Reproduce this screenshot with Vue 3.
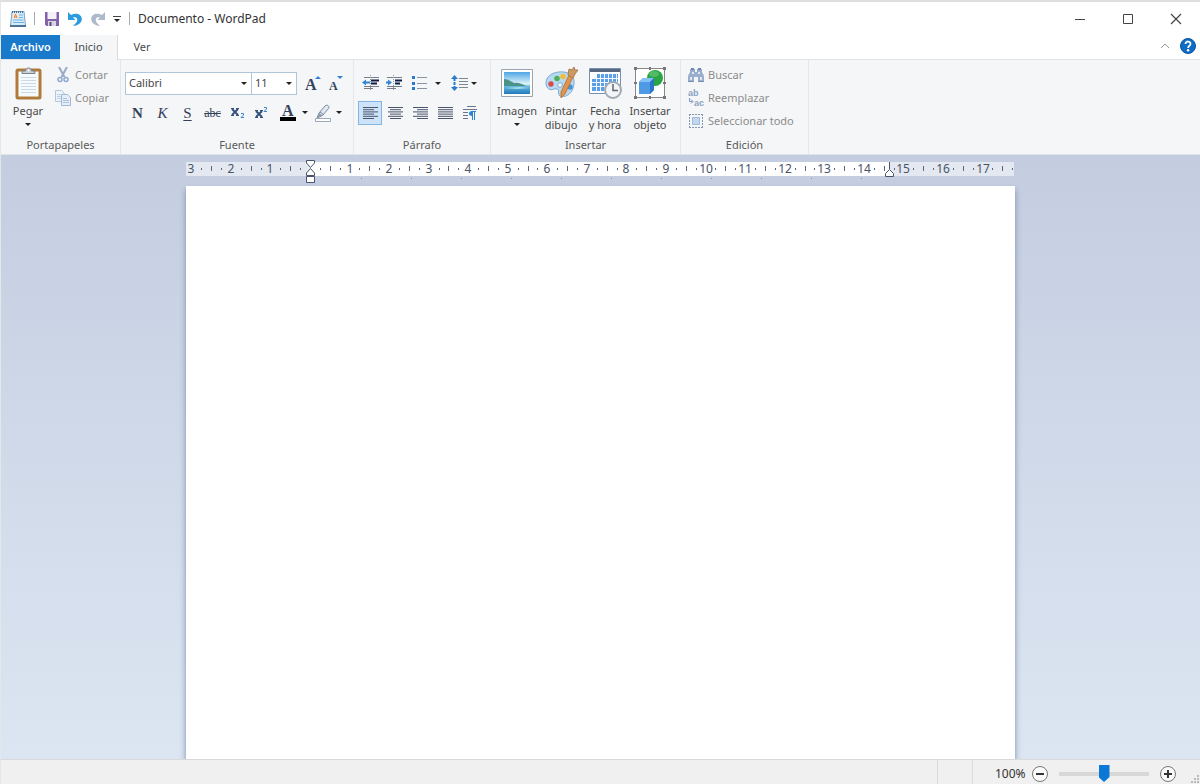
<script setup>
import { ref } from 'vue'

const font = ref('Calibri')
const size = ref('11')
const zoom = ref(50)
const text = ref('')

const CM = 39.56
const ZERO = 124
const labels = []
const dots = []
const ticks = []
for (let n = -3; n <= 17; n++) {
  const x = Math.round(ZERO + n * CM)
  if (n !== 0) labels.push({ x: Math.max(x, 5), t: Math.abs(n) })
  dots.push(Math.round(ZERO + (n + 0.25) * CM))
  ticks.push(Math.round(ZERO + (n + 0.5) * CM))
  dots.push(Math.round(ZERO + (n + 0.75) * CM))
}
const stops = Array.from({ length: 11 }, (_, i) => 175 + i * 50)

const aligns = [
  { name: 'Alinear a la izquierda', rows: [[0, 15], [0, 11], [0, 15], [0, 11], [0, 15], [0, 11]] },
  { name: 'Centrar', rows: [[0, 15], [2, 11], [0, 15], [2, 11], [0, 15], [2, 11]] },
  { name: 'Alinear a la derecha', rows: [[0, 15], [4, 11], [0, 15], [4, 11], [0, 15], [4, 11]] },
  { name: 'Justificar', rows: [[0, 15], [0, 15], [0, 15], [0, 15], [0, 15], [0, 15]] }
]
</script>

<template>
  <div class="window">
    <header class="titlebar">
      <svg class="app-icon" width="18" height="18" viewBox="0 0 18 18">
        <path d="M3 1.500h12l1.500 14.500h-15z" fill="#d8ecf8" stroke="#7fa3c0" />
        <path d="M3 2h12" stroke="#47719a" stroke-width="2" stroke-dasharray="1 1" />
        <path d="M4 4h5v4.500H4z" fill="#fbe9dc" />
        <path d="M5 8l1.500-4 1.500 4M5.500 7h2" stroke="#e0843f" fill="none" />
        <path d="M10 5h4M10 7.500h4M4 10h10.500M4 12.500h11" stroke="#6fb2e0" />
        <path d="M1 16h16" stroke="#4c7296" stroke-width="2" />
      </svg>
      <i class="bar"></i>
      <button class="qa" aria-label="Guardar">
        <svg width="16" height="16" viewBox="0 0 16 16">
          <path d="M1 1h14v14H2.500L1 13.500z" fill="#8462ad" />
          <path d="M3.500 1h9v7h-9z" fill="#f4f1f8" />
          <path d="M4 10h8v5H4z" fill="#d9d6df" />
          <path d="M5.500 11h2v4h-2z" fill="#5c4385" />
        </svg>
      </button>
      <button class="qa" aria-label="Deshacer">
        <svg width="16" height="16" viewBox="0 0 16 16">
          <path d="M1 1v8h7.500L6 6.500c3-.6 4.600 .6 4.200 2.800-.3 2-1.600 3.400-4.200 5.700 5.400-.4 8.700-3.200 8.800-7C14.900 3.200 9 1.200 4 4z" fill="#2d9bdf" />
        </svg>
      </button>
      <button class="qa" aria-label="Rehacer">
        <svg width="16" height="16" viewBox="0 0 16 16">
          <path d="M15 1v8H7.500L10 6.500c-3-.6-4.600 .6-4.200 2.800.3 2 1.600 3.400 4.200 5.700-5.400-.4-8.700-3.200-8.800-7C1.100 3.200 7 1.200 12 4z" fill="#adbacb" />
        </svg>
      </button>
      <button class="qa narrow" aria-label="Personalizar barra de herramientas">
        <svg width="8" height="8" viewBox="0 0 8 8"><path d="M0 1.500h8" stroke="#444" /><path d="M1 4h6L4 7z" fill="#222" /></svg>
      </button>
      <i class="bar end"></i>
      <h1>Documento - WordPad</h1>
      <div class="controls">
        <button aria-label="Minimizar"><svg width="12" height="12"><path d="M1 6.500h10" stroke="#444" /></svg></button>
        <button aria-label="Maximizar"><svg width="12" height="12"><path d="M1.500 1.500h9v9h-9z" fill="none" stroke="#444" /></svg></button>
        <button aria-label="Cerrar"><svg width="12" height="12"><path d="M1 1l10 10M11 1L1 11" stroke="#444" stroke-width="1.200" /></svg></button>
      </div>
    </header>

    <nav class="tabs">
      <button class="tab file">Archivo</button>
      <button class="tab active">Inicio</button>
      <button class="tab view">Ver</button>
      <div class="tab-tools">
        <button aria-label="Minimizar la cinta"><svg width="10" height="6"><path d="M1 5l4-4 4 4" fill="none" stroke="#999" /></svg></button>
        <button aria-label="Ayuda">
          <svg width="18" height="18" viewBox="0 0 18 18">
            <circle cx="9" cy="9" r="7.500" fill="#0f6cc4" stroke="#0a56a3" />
            <path d="M6.500 7c0-3.400 5.200-3.200 5 0-.1 1.700-2.400 1.900-2.400 4" fill="none" stroke="#fff" stroke-width="1.800" />
            <circle cx="9.100" cy="13.300" r="1.200" fill="#fff" />
          </svg>
        </button>
      </div>
    </nav>

    <main class="ribbon">
      <section class="group clipboard">
        <div class="body">
          <button class="big paste">
            <svg width="32" height="34" viewBox="0 0 32 34">
              <rect x="5" y="4" width="23" height="28" rx="1" fill="#fff" stroke="#b07a3c" stroke-width="3" />
              <path d="M7 7h19v23H7z" fill="#f7fafc" />
              <path d="M9 11.500h15M9 14.500h15M9 17.500h15M9 20.500h15M9 23.500h15M9 26.500h15" stroke="#c9d9e6" />
              <path d="M10 7.500V5h3.500c0-4 6-4 6 0H23v2.500z" fill="#c9ced4" stroke="#7b848f" />
              <circle cx="16.500" cy="4.500" r="1" fill="#fff" />
            </svg>
            <span>Pegar</span>
            <svg class="caret" width="6" height="4"><path d="M0 0h6L3 3z" fill="#222" /></svg>
          </button>
          <div class="stack">
            <button class="small" disabled>
              <svg width="16" height="16" viewBox="0 0 16 16">
                <path d="M4 0l5.500 10M12 0L6.500 10" stroke="#98abc5" stroke-width="2" />
                <circle cx="5" cy="12.500" r="2" fill="none" stroke="#8fa9cf" stroke-width="1.500" />
                <circle cx="11" cy="12.500" r="2" fill="none" stroke="#8fa9cf" stroke-width="1.500" />
              </svg>Cortar
            </button>
            <button class="small" disabled>
              <svg width="16" height="16" viewBox="0 0 16 16">
                <path d="M.5.500h6l2.500 2.500v8.500H.5z" fill="#eef3fa" stroke="#b3c5dd" />
                <path d="M2 4.500h4M2 6.500h4M2 8.500h4" stroke="#c0cfe3" />
                <path d="M6.500 4.500h6l3 3v8h-9z" fill="#e4edf8" stroke="#a0b7d6" />
                <path d="M8 8.500h4M8 10.500h6M8 12.500h6" stroke="#acc1de" />
              </svg>Copiar
            </button>
          </div>
        </div>
        <h2>Portapapeles</h2>
      </section>

      <section class="group fonts">
        <div class="body rows">
          <div class="row">
            <label class="combo family">
              <select v-model="font" aria-label="Familia de fuente"><option>Calibri</option><option>Arial</option></select>
              <svg width="6" height="4"><path d="M0 0h6L3 3z" fill="#222" /></svg>
            </label>
            <label class="combo size">
              <select v-model="size" aria-label="Tamaño de fuente"><option>11</option><option>12</option></select>
              <svg width="6" height="4"><path d="M0 0h6L3 3z" fill="#222" /></svg>
            </label>
            <button class="tool first" aria-label="Agrandar fuente">
              <svg width="20" height="24" viewBox="0 0 20 24"><text class="letter" x="2" y="19" font-size="16">A</text><path d="M12 8h6l-3-3z" fill="#3480d4" /></svg>
            </button>
            <button class="tool" aria-label="Encoger fuente">
              <svg width="20" height="24" viewBox="0 0 20 24"><text class="letter" x="2" y="19" font-size="12">A</text><path d="M10 5h6l-3 3z" fill="#3480d4" /></svg>
            </button>
          </div>
          <div class="row format">
            <button class="tool bold" aria-label="Negrita">N</button>
            <button class="tool italic" aria-label="Cursiva">K</button>
            <button class="tool underline" aria-label="Subrayado">S</button>
            <button class="tool strike" aria-label="Tachado">abc</button>
            <button class="tool" aria-label="Subíndice">
              <svg width="18" height="18" viewBox="0 0 18 18"><path d="M3 5l6 6M9 5l-6 6" stroke="#35527f" stroke-width="2" /><path d="M2 4.500h3M7 4.500h3M2 11.500h3M7 11.500h3" stroke="#35527f" /><path d="M12 9.500h2.500v1.500L12 13.500h3" fill="none" stroke="#3b86d2" /></svg>
            </button>
            <button class="tool" aria-label="Superíndice">
              <svg width="18" height="18" viewBox="0 0 18 18"><path d="M2 7l6 6M8 7l-6 6" stroke="#35527f" stroke-width="2" /><path d="M1 6.500h3M6 6.500h3M1 13.500h3M6 13.500h3" stroke="#35527f" /><path d="M10 3.500h2.500V5L10 7.500h3" fill="none" stroke="#3b86d2" /></svg>
            </button>
            <button class="tool drop" aria-label="Color de texto">
              <svg width="32" height="20" viewBox="0 0 32 20"><text class="letter" x="5" y="13" font-size="16">A</text><path d="M3 14h16v4H3z" fill="#000" /><path d="M25 8h6l-3 3z" fill="#222" /></svg>
            </button>
            <button class="tool drop" aria-label="Color de resaltado">
              <svg width="32" height="20" viewBox="0 0 32 20">
                <path d="M3.500 15.500h15v3h-15z" fill="#fff" stroke="#9ca9bb" />
                <path d="M5 15l2-5 6-7c2-2 5 0 3.500 2.500l-6 7L5 15z" fill="#e1e7ef" stroke="#7888a0" />
                <path d="M5 15l2-5 3.500 2.500z" fill="#8a9cb2" /><path d="M8 9l4 3" stroke="#7888a0" />
                <path d="M24 8h6l-3 3z" fill="#222" />
              </svg>
            </button>
          </div>
        </div>
        <h2>Fuente</h2>
      </section>

      <section class="group paragraph">
        <div class="body rows">
          <div class="row indents">
            <button class="tool" aria-label="Reducir sangría">
              <svg width="18" height="18" viewBox="0 0 18 18"><path d="M2 3.500h15M2 12.500h15M2 14.500h9" stroke="#777f8e" /><path d="M9 6.500h8M9 9.500h6" stroke="#111b43" stroke-width="2" /><path d="M8.500 1v16" stroke="#999" stroke-dasharray="1 1" /><path d="M0 8.500l4-3v2h4v2H4v2z" fill="#3185d8" /></svg>
            </button>
            <button class="tool" aria-label="Aumentar sangría">
              <svg width="18" height="18" viewBox="0 0 18 18"><path d="M1 3.500h15M1 12.500h15M1 14.500h9" stroke="#777f8e" /><path d="M9 6.500h7M9 9.500h5" stroke="#111b43" stroke-width="2" /><path d="M7.500 1v16" stroke="#999" stroke-dasharray="1 1" /><path d="M6 8.500l-4-3v2H0v2h2v2z" fill="#3185d8" /></svg>
            </button>
            <button class="tool drop list" aria-label="Lista">
              <svg width="30" height="16" viewBox="0 0 30 16"><path d="M6 2.500h10M6 8.500h10M6 13.500h10" stroke="#8a93a1" /><path d="M1 1h3v3H1zM1 7h3v3H1zM1 12h3v3H1z" fill="#287bd0" /><path d="M24 7h6l-3 3z" fill="#222" /></svg>
            </button>
            <button class="tool drop spacing" aria-label="Interlineado">
              <svg width="28" height="18" viewBox="0 0 28 18"><path d="M9 4.500h9M9 7.500h9M9 10.500h9M9 13.500h9" stroke="#7d8694" /><path d="M1 5h7L4.500 1zM1 13h7l-3.500 4z" fill="#287bd0" /><path d="M4.500 4v10" stroke="#287bd0" stroke-width="2" stroke-dasharray="3 1" /><path d="M21 8h6l-3 3z" fill="#222" /></svg>
            </button>
          </div>
          <div class="row">
            <button v-for="(a, i) in aligns" :key="a.name" class="tool spaced" :class="{ selected: i === 0 }" :aria-label="a.name">
              <svg width="15" height="14" viewBox="0 0 15 14">
                <rect v-for="(r, j) in a.rows" :key="j" :x="r[0]" :y="1 + j * 2.2" :width="r[1]" height="1" fill="#4a546c" />
              </svg>
            </button>
            <button class="tool" aria-label="Párrafo">
              <svg width="16" height="16" viewBox="0 0 16 16"><path d="M5 1.500h9M1 4.500h14M1 7.500h5M1 10.500h5M1 13.500h5" stroke="#68758b" /><path d="M10 6H14V7H13V15H12V7H11V15H10V11C6 11 6 6 10 6z" fill="#2f83d5" /></svg>
            </button>
          </div>
        </div>
        <h2>Párrafo</h2>
      </section>

      <section class="group insert">
        <div class="body">
          <button class="big">
            <svg width="34" height="34" viewBox="0 0 34 34">
              <defs><linearGradient id="sky" x1="0" y1="0" x2="0" y2="1"><stop offset="0" stop-color="#4fa5e5" /><stop offset=".55" stop-color="#e0f5fa" /><stop offset=".65" stop-color="#65b8de" /><stop offset="1" stop-color="#2179bb" /></linearGradient></defs>
              <path d="M1.500 3.500h31v27h-31z" fill="#fff" stroke="#9aa5b1" />
              <path d="M4 6h26v22H4z" fill="url(#sky)" />
              <path d="M4 13c4 0 6 2 10 4 4-1 8 1 12 3H4z" fill="#4b9287" />
              <path d="M4 22l16-1 10 1-13 1z" fill="#a7dfe9" />
            </svg>
            <span>Imagen</span>
            <svg class="caret" width="6" height="4"><path d="M0 0h6L3 3z" fill="#222" /></svg>
          </button>
          <button class="big">
            <svg width="34" height="34" viewBox="0 0 34 34">
              <path d="M2 17C2 9 11 5 20 6c9 1 12 8 9 16-2 7-9 10-13 8-3-2 0-6-3-7s-5 2-8 0c-2-1-3-3-3-6z" fill="#b8d9f2" stroke="#7fabd0" />
              <circle cx="7" cy="18" r="2.700" fill="#d94b49" /><circle cx="13" cy="12.500" r="2.700" fill="#4caf51" /><circle cx="19" cy="10.500" r="2.700" fill="#f0bd37" /><circle cx="16" cy="19" r="2.300" fill="#fff" stroke="#7ba9ce" /><circle cx="26" cy="21" r="2.700" fill="#4b91d8" />
              <path d="M25 9l4 2-8 17-4 4 0-6z" fill="#e0954e" stroke="#b96a25" stroke-width=".8" />
              <path d="M25 3l3 1 2-3 1 3h3l-3 4-2 4-5-3z" fill="#cd9a64" stroke="#a97b50" />
            </svg>
            <span>Pintar<br>dibujo</span>
          </button>
          <button class="big">
            <svg width="34" height="34" viewBox="0 0 34 34">
              <path d="M1.500 2.500h31v25h-31z" fill="#fff" stroke="#7890b4" />
              <path d="M2 3h30v3H2z" fill="#59677e" />
              <path d="M4 8h26v17H4z" fill="#5a9fe8" />
              <path d="M4 12.500h26M4 16.500h26M4 20.500h26M8.500 8v17M12.500 8v17M16.500 8v17M20.500 8v17M24.500 8v17M28.500 8v17" stroke="#f5f9ff" />
              <path d="M4 8h4v4H4z" fill="#fff" />
              <circle cx="25" cy="24" r="8" fill="#f3f5f7" stroke="#a2aab3" stroke-width="2" />
              <path d="M25 18v6.500h5" fill="none" stroke="#5d6874" stroke-width="1.500" />
            </svg>
            <span>Fecha<br>y hora</span>
          </button>
          <button class="big last">
            <svg width="34" height="34" viewBox="0 0 34 34">
              <path d="M2.500 2.500h29v29h-29z" fill="#fff" stroke="#888" />
              <circle cx="22" cy="12" r="8" fill="#2ba443" /><ellipse cx="21" cy="8" rx="5" ry="3" fill="#64c576" opacity=".7" />
              <path d="M6 16l4-4h11v12l-4 4H6z" fill="#4f9ae4" /><path d="M6 16l4-4h11l-4 4z" fill="#83c0f5" /><path d="M17 16l4-4v12l-4 4z" fill="#2b76c8" />
              <path d="M1 1h3v3H1zM16 1h2v3h-2zM30 1h3v3h-3zM1 16h3v2H1zM30 16h3v2h-3zM1 30h3v3H1zM16 30h2v3h-2zM30 30h3v3h-3z" fill="#777" />
            </svg>
            <span>Insertar<br>objeto</span>
          </button>
        </div>
        <h2>Insertar</h2>
      </section>

      <section class="group edit">
        <div class="body">
          <div class="stack">
            <button class="small" disabled>
              <svg width="16" height="16" viewBox="0 0 16 16">
                <path d="M2 5V2h5v3h2V2h5v3l2 4v6h-6v-5H6v5H0V9z" fill="#98aecb" /><path d="M3 1h3v2H3zM10 1h3v2h-3z" fill="#7189ab" /><path d="M2 10h2v3H2zM12 10h2v3h-2zM4 5h2v2H4zM10 5h2v2h-2z" fill="#dce6f3" /><path d="M0 14.500h6M10 14.500h6" stroke="#758fb3" />
              </svg>Buscar
            </button>
            <button class="small" disabled>
              <span class="swap">
                <span>ab</span>
                <span class="to"><svg width="6" height="6" viewBox="0 0 6 6"><path d="M1.500 0v3.500h3M3 1.500l2 2-2 2" fill="none" stroke="#7898c6" /></svg>ac</span>
              </span>Reemplazar
            </button>
            <button class="small" disabled>
              <svg width="16" height="16" viewBox="0 0 16 16"><path d="M1 1.500h14M1 14.500h14M1.500 1v14M14.500 1v14" fill="none" stroke="#8194b0" stroke-dasharray="2 1" /><path d="M4.500 4.500h7v7h-7z" fill="#c3d7ef" stroke="#9fb9da" /></svg>Seleccionar todo
            </button>
          </div>
        </div>
        <h2>Edición</h2>
      </section>
    </main>

    <div class="workspace">
      <svg class="ruler" width="829" height="26" viewBox="0 0 829 26">
        <path d="M0 2h828v14H0z" fill="#e4e8f1" />
        <path d="M124 2h579v14H124z" fill="#fff" />
        <g fill="#5c6678">
          <rect v-for="d in dots.filter(d => d > 0 && d < 829)" :key="'d' + d" :x="d" y="8" width="1" height="2" />
          <rect v-for="t in ticks.filter(t => t > 0 && t < 829)" :key="'t' + t" :x="t" y="6" width="1" height="5" />
        </g>
        <rect v-for="s in stops" :key="'s' + s" :x="s" y="18" width="1" height="1" fill="#8790a3" />
        <text v-for="l in labels" :key="l.x" :x="l.x" y="13" text-anchor="middle">{{ l.t }}</text>
        <g fill="#fff" stroke="#4a5468">
          <path d="M120.500.500h8v2.500l-4 4.500-4-4.500z" />
          <path d="M120.500 15.500v-2.500l4-4.500 4 4.500v2.500z" />
          <path d="M120.500 16.500h8v6h-8z" />
          <path d="M699.500 16.500v-3l4-4 4 4v3z" />
        </g>
        <path d="M703.500 2v7" stroke="#4a5468" />
      </svg>
      <textarea v-model="text" class="page" aria-label="Documento" spellcheck="false"></textarea>
    </div>

    <footer class="status">
      <div class="cell"></div>
      <div class="zoom">
        <label for="zoom">100%</label>
        <button aria-label="Alejar"><svg width="18" height="18"><circle cx="9" cy="9" r="7.500" fill="#fafafa" stroke="#777" /><path d="M5 9h8" stroke="#333" stroke-width="2" /></svg></button>
        <input id="zoom" v-model="zoom" type="range" min="0" max="100">
        <button aria-label="Acercar"><svg width="18" height="18"><circle cx="9" cy="9" r="7.500" fill="#fafafa" stroke="#777" /><path d="M5 9h8M9 5v8" stroke="#333" stroke-width="2" /></svg></button>
      </div>
      <svg class="grip" width="10" height="10"><path d="M7 1h2v2H7zM4 4h2v2H4zM7 4h2v2H7zM1 7h2v2H1zM4 7h2v2H4zM7 7h2v2H7z" fill="#bbb" /></svg>
    </footer>
  </div>
</template>

<style>
body { margin: 0; }
</style>

<style scoped>
* { box-sizing: border-box; }
.window {
  display: flex; flex-direction: column; min-height: 100vh;
  border-top: 2px solid #dedede; border-left: 1px solid #e4e6ea;
  background: #fff; color: #4a4a4a; font: 11px/14px "Noto Sans", "Open Sans", sans-serif;
}
button { padding: 0; border: 0; background: none; font: inherit; color: inherit; }
svg { display: block; flex: none; }
h1, h2 { margin: 0; font-weight: 400; }

.titlebar { display: flex; align-items: center; height: 33px; padding-left: 8px; }
.bar { width: 1px; height: 13px; margin: 0 5px 0 7px; background: #aaa; }
.bar.end { margin: 0 8px 0 5px; }
.qa { display: grid; place-items: center; width: 23px; height: 24px; }
.qa.narrow { width: 15px; }
.titlebar h1 { font-size: 12px; line-height: 16px; color: #333; }
.controls { display: flex; margin-left: auto; }
.controls button { display: grid; place-items: center; width: 48px; height: 32px; }

.tabs { display: flex; height: 25px; border-bottom: 1px solid #e1e3e6; }
.tab { height: 25px; padding-bottom: 2px; }
.file { width: 59px; height: 24px; padding-bottom: 0; background: #1979ca; color: #fff; font-weight: 600; }
.active { width: 58px; background: #f5f6f7; border-right: 1px solid #dadbdc; }
.view { width: 48px; }
.tab-tools { display: flex; align-items: center; gap: 9px; margin-left: auto; padding: 0 3px 2px 0; }

.ribbon { display: flex; min-height: 95px; background: #f5f6f7; border-bottom: 1px solid #dfe5e9; }
.group { display: flex; flex-direction: column; padding-top: 3px; border-right: 1px solid #e4e6e9; }
.body { display: flex; height: 74px; padding-left: 4px; }
.group h2 { text-align: center; font-size: 11px; line-height: 16px; color: #5a5a5a; }
.clipboard { width: 120px; }
.fonts { width: 233px; }
.paragraph { width: 137px; }
.insert { width: 190px; }
.edit { width: 128px; }
.edit .body { padding-left: 7px; }
.big { display: flex; flex-direction: column; align-items: center; width: 44px; padding-top: 3px; white-space: nowrap; }
.big span { margin-top: 4px; }
.big .caret { margin-top: 5px; }
.last { width: 46px; }
.clipboard .body { padding-left: 0; }
.paste { width: 54px; }
.stack { display: flex; flex-direction: column; }
.small { display: flex; align-items: center; gap: 4px; height: 23px; white-space: nowrap; }
.small:disabled { color: #8c8c8c; }
.swap { width: 16px; font: 700 9px/10px "Liberation Sans", sans-serif; text-align: left; color: #8ca2c4; }
.swap span { display: flex; }

.rows { flex-direction: column; padding-top: 8px; gap: 6px; }
.row { display: flex; height: 24px; align-items: center; }
.indents { padding-left: 1px; }
.tool { display: grid; place-items: center; width: 24px; height: 24px; }
.tool.first { margin-left: 4px; }
.format .tool { width: 25px; }
.format .tool.drop { width: 35px; }
.spaced { margin-right: 1px; }
.selected { background: #cce3f9; border: 1px solid #84b4e2; }
.tool.list { width: 34px; margin-left: 2px; }
.tool.spacing { width: 32px; margin-left: 5px; }
.bold, .italic, .underline, .strike { font-family: "Liberation Serif", serif; font-size: 15px; color: #34405a; }
.bold { font-weight: 700; }
.italic { font-style: italic; }
.underline { text-decoration: underline; text-underline-offset: 2px; }
.strike { font-size: 12px; text-decoration: line-through; }
.letter { font-family: "Liberation Serif", serif; font-weight: 700; fill: #34435d; }
.combo { position: relative; }
.combo select {
  display: block; width: 100%; height: 23px; padding: 0 3px; appearance: none;
  border: 1px solid #aec5da; border-radius: 0; background: #fff; color: #444; font: inherit;
}
.combo svg { position: absolute; right: 5px; top: 10px; pointer-events: none; }
.family { width: 127px; }
.size { width: 46px; margin-left: -1px; }

.workspace {
  display: flex; flex: 1; flex-direction: column; align-items: center; padding-top: 5px; overflow: hidden;
  background: linear-gradient(#c4cde0, #dce6f2);
}
.ruler { max-width: 100%; }
.ruler text { font: 12px "Noto Sans", sans-serif; fill: #4a5468; }
.page {
  display: block; flex: 1; width: 829px; max-width: 100%; padding: 40px 124px; border: 0; outline: 0; resize: none;
  background: #fff; box-shadow: 0 4px 6px #7c8ba8; font: 15px/20px "Noto Sans", sans-serif;
}

.status { display: flex; align-items: stretch; justify-content: flex-end; height: 25px; border-top: 1px solid #d9d9d9; background: #f0f0f0; }
.cell { width: 36px; border: solid #dadada; border-width: 0 1px; }
.zoom { display: flex; align-items: center; padding: 3px 0 0 22px; font-size: 12px; }
.zoom label { width: 36px; color: #333; }
.zoom input { appearance: none; width: 90px; height: 18px; margin: 0 10px; background: linear-gradient(#d8d8d8, #d8d8d8) center / 100% 4px no-repeat; }
.zoom input::-webkit-slider-thumb { appearance: none; width: 11px; height: 17px; background: #0a78d4; clip-path: polygon(0 0, 100% 0, 100% 70%, 50% 100%, 0 70%); }
.grip { align-self: flex-end; margin-left: 13px; }
</style>
